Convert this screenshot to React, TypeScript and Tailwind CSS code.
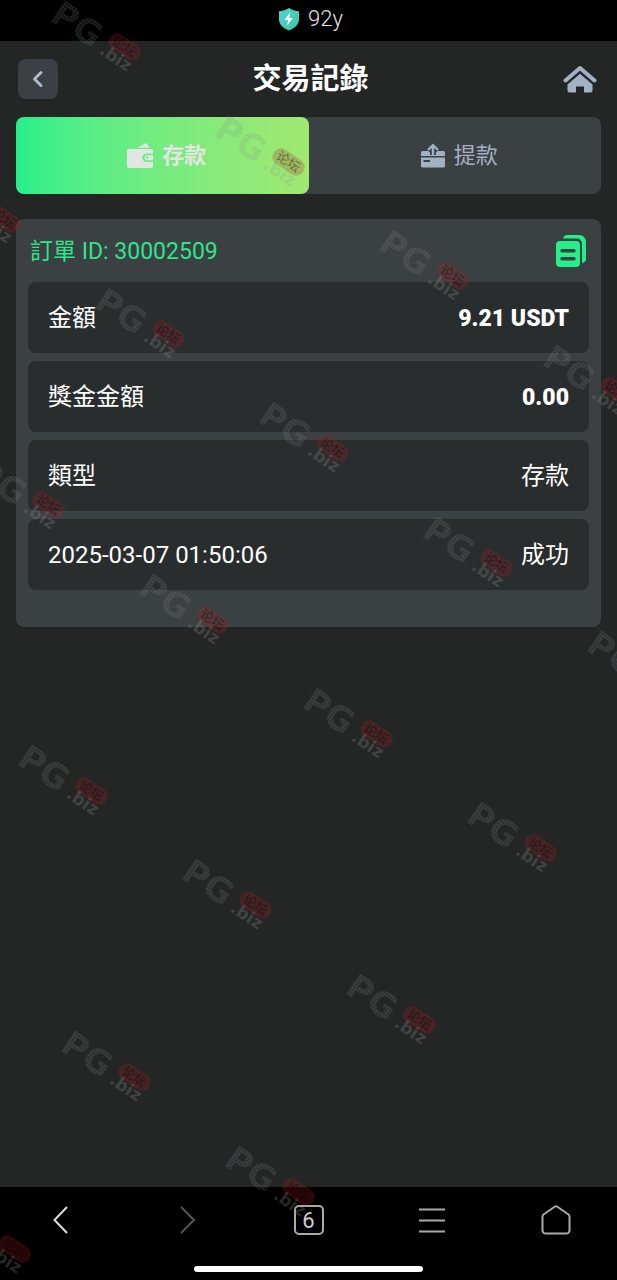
import { useState } from "react";

const rows = [
  { label: "金額", value: "9.21 USDT", strong: true },
  { label: "獎金金額", value: "0.00", strong: true },
  { label: "類型", value: "存款", strong: false },
  { label: "2025-03-07 01:50:06", value: "成功", strong: false },
];

// left foot of each stamp
const stamps = [
  [50, 19], [214, 134], [378, 248], [542, 363],
  [-70, 191], [94, 306], [258, 420], [422, 535], [586, 649],
  [-26, 477], [138, 592], [302, 706], [466, 820],
  [17, 763], [181, 877], [345, 992],
  [60, 1049], [224, 1164], [-60, 1221],
];

const Watermark = () => (
  <svg className="pointer-events-none absolute inset-0 h-full w-full" aria-hidden="true">
    <defs>
      <pattern id="dots" width="3" height="3" patternUnits="userSpaceOnUse">
        <rect width="3" height="3" fill="#888" fillOpacity="0.1" />
        <rect width="2" height="2" fill="#888" fillOpacity="0.2" />
      </pattern>
    </defs>
    {stamps.map(([x, y]) => (
      <g key={`${x}-${y}`} transform={`translate(${x} ${y}) rotate(34)`}>
        <text x="-1" y="1" fontFamily="DejaVu Sans" fontWeight="700" fontSize="34" fill="url(#dots)">
          PG
        </text>
        <rect x="60" y="-27" width="35" height="17" rx="8" fill="#b01e2a" fillOpacity="0.24" />
        <text x="64" y="-14" fontFamily="Noto Sans CJK SC" fontWeight="500" fontSize="13" fill="#000" fillOpacity="0.35">
          论坛
        </text>
        <text x="59" y="1" fontFamily="DejaVu Sans" fontWeight="700" fontSize="17" fill="#999" fillOpacity="0.25">
          .biz
        </text>
      </g>
    ))}
  </svg>
);

const WalletIcon = () => (
  <svg width="28" height="26" viewBox="0 0 28 26" fill="currentColor">
    <path d="M11 4.800 18.500.9c1.300-.6 2.600-.2 3.300 1l1.400 2.900z" />
    <path
      fillRule="evenodd"
      d="M3 6h22a2 2 0 0 1 2 2v2.500h-6.500a4.200 4.200 0 0 0 0 8.400H27V23a2 2 0 0 1-2 2H3a2 2 0 0 1-2-2V8a2 2 0 0 1 2-2z"
    />
    <path fillRule="evenodd" d="M21 12.200h6v5h-6a2.500 2.500 0 0 1 0-5zm.2 1.400a1.100 1.100 0 1 0 0 2.200 1.100 1.100 0 0 0 0-2.200z" />
  </svg>
);

const WithdrawIcon = () => (
  <svg width="26" height="26" viewBox="0 0 26 26" fill="currentColor">
    <path d="M2.500 8H8.500L10 9.500V12h6V9.500L17.500 8H23.500A1.500 1.500 0 0 1 25 9.500V13H1V9.500A1.500 1.500 0 0 1 2.500 8z" />
    <path
      fillRule="evenodd"
      d="M1 14.500h24v8.500a1.500 1.500 0 0 1-1.500 1.500h-21A1.500 1.500 0 0 1 1 23zm2.500 2.500v2H10v-2z"
    />
    <path d="M13 12V3M8 7l5-4.800L18 7" fill="none" stroke="currentColor" strokeWidth="2.400" />
  </svg>
);

const App = () => {
  const [tab, setTab] = useState("deposit");
  const active = "bg-linear-to-r from-[#23ef8b] to-[#a0e871] font-bold text-[#e2e5e4]";
  const idle = "text-[#a3b1c5]";

  return (
    <div className="relative flex min-h-screen flex-col overflow-hidden bg-[#242626] font-['Roboto','Noto_Sans_CJK_TC',sans-serif] text-white">
      {/* status bar */}
      <div className="flex h-[41px] items-center justify-center gap-2 bg-black pb-1 pl-1">
        <svg width="22" height="24" viewBox="0 0 22 24">
          <defs>
            <linearGradient id="shield" x1="0" y1="0" x2="1" y2="1">
              <stop offset="0" stopColor="#5bd3d6" />
              <stop offset="1" stopColor="#2fc9a0" />
            </linearGradient>
          </defs>
          <path d="M11 1c3 2 6 3 10 3.300V12c0 5.500-4 9-10 11.500C5 21 1 17.500 1 12V4.300C5 4 8 3 11 1z" fill="url(#shield)" />
          <path d="M12 5.500 6.500 13H10l-.8 5.500L15 11h-3.600z" fill="#fff" />
        </svg>
        <span className="text-[22px] font-light text-[#e4e4e4]">92y</span>
      </div>

      {/* header */}
      <header className="flex h-19 items-center justify-between pr-5 pl-[18px]">
        <button aria-label="返回" className="flex size-10 items-center justify-center rounded-lg bg-[#3b4044] text-[#b0bccd]">
          <svg width="20" height="20" viewBox="0 0 20 20" fill="none" stroke="currentColor" strokeWidth="3" strokeLinecap="round" strokeLinejoin="round">
            <path d="M13 3.500 6.500 10l6.500 6.500" />
          </svg>
        </button>
        <h1 className="text-[29px] leading-10 font-bold">交易記錄</h1>
        <a href="#home" aria-label="首頁" className="text-[#a3b1c5]">
          <svg width="34" height="28" viewBox="0 0 34 28" fill="currentColor">
            <path d="M2.500 15.500 17 3l14.500 12.500" fill="none" stroke="currentColor" strokeWidth="4" strokeLinecap="round" strokeLinejoin="round" />
            <path d="M17 8.800 29.500 19.500V25.500a2 2 0 0 1-2 2H21V21.500h-8v6H6.500a2 2 0 0 1-2-2v-6z" />
          </svg>
        </a>
      </header>

      <main className="flex-1 px-4">
        {/* tabs */}
        <div className="mb-[25px] grid grid-cols-2 rounded-lg bg-[#3b4042] text-[22px]">
          <button
            onClick={() => setTab("deposit")}
            className={`flex h-[77px] items-center justify-center gap-2 rounded-lg pl-2 ${tab === "deposit" ? active : idle}`}
          >
            <WalletIcon />
            存款
          </button>
          <button
            onClick={() => setTab("withdraw")}
            className={`flex h-[77px] items-center justify-center gap-2 rounded-lg pl-2 ${tab === "withdraw" ? active : idle}`}
          >
            <WithdrawIcon />
            提款
          </button>
        </div>

        {/* order card */}
        <section className="rounded-lg bg-[#3b4042] px-3 pb-[37px]">
          <div className="flex h-[63px] items-center justify-between px-0.5 text-[#2fe58c]">
            <h2 className="pt-1 text-[23px]">訂單 ID: 30002509</h2>
            <button aria-label="複製" className="text-[#23ef8b]">
              <svg width="32" height="34" viewBox="0 0 32 34" fill="currentColor">
                <path d="M8 4.500C8.500 2.500 10 1 12.500 1H24c4 0 7 3 7 7v17c0 2-1.500 3.500-4 4V10c0-3-2-5.500-5-5.500z" />
                <path
                  fillRule="evenodd"
                  d="M5 7h16a4 4 0 0 1 4 4v18a4 4 0 0 1-4 4H5a4 4 0 0 1-4-4V11a4 4 0 0 1 4-4zm2 8a1.700 1.700 0 0 0 0 3.400h12a1.700 1.700 0 0 0 0-3.400zm0 8a1.700 1.700 0 0 0 0 3.400h12a1.700 1.700 0 0 0 0-3.400z"
                />
              </svg>
            </button>
          </div>
          <dl className="flex flex-col gap-2 text-[24px]">
            {rows.map((row) => (
              <div key={row.label} className="flex h-[71px] items-center justify-between rounded-lg bg-[#292d2e] px-5">
                <dt>{row.label}</dt>
                <dd className={row.strong ? "pt-1 text-[23px] font-black" : ""}>{row.value}</dd>
              </div>
            ))}
          </dl>
        </section>
      </main>

      {/* browser bar */}
      <footer className="flex h-[93px] flex-col items-center justify-between bg-black pt-[17px] pb-2">
        <nav className="flex w-full items-center justify-between px-11 text-[#aaaaaa]">
          <button aria-label="上一頁" className="text-[#dddddd]">
            <svg width="32" height="32" viewBox="0 0 32 32" fill="none" stroke="currentColor" strokeWidth="2">
              <path d="M23 3 10.500 16 23 29" />
            </svg>
          </button>
          <button aria-label="下一頁" className="text-[#555555]">
            <svg width="32" height="32" viewBox="0 0 32 32" fill="none" stroke="currentColor" strokeWidth="2">
              <path d="M12 3 25 16 12 29" />
            </svg>
          </button>
          <button className="flex h-[30px] w-[30px] items-center justify-center rounded-[5px] border-2 border-[#aaaaaa] text-[22px] text-[#cccccc]">6</button>
          <button aria-label="選單">
            <svg width="32" height="32" viewBox="0 0 32 32" fill="none" stroke="currentColor" strokeWidth="2">
              <path d="M3 5.500h26M3 16.500h26M3 27.500h26" />
            </svg>
          </button>
          <button aria-label="主頁">
            <svg width="32" height="32" viewBox="0 0 32 32" fill="none" stroke="currentColor" strokeWidth="2" strokeLinejoin="round">
              <path d="M14 2.500 2.500 10.500Q1.500 11.300 1.500 12.500V26.500a3 3 0 0 0 3 3H25.500a3 3 0 0 0 3-3V12.500Q28.500 11.300 27.500 10.500L16 2.500Q15 1.900 14 2.500z" />
            </svg>
          </button>
        </nav>
        <div className="h-1.5 w-[37%] rounded-full bg-white" />
      </footer>

      <Watermark />
    </div>
  );
};

export default App;
